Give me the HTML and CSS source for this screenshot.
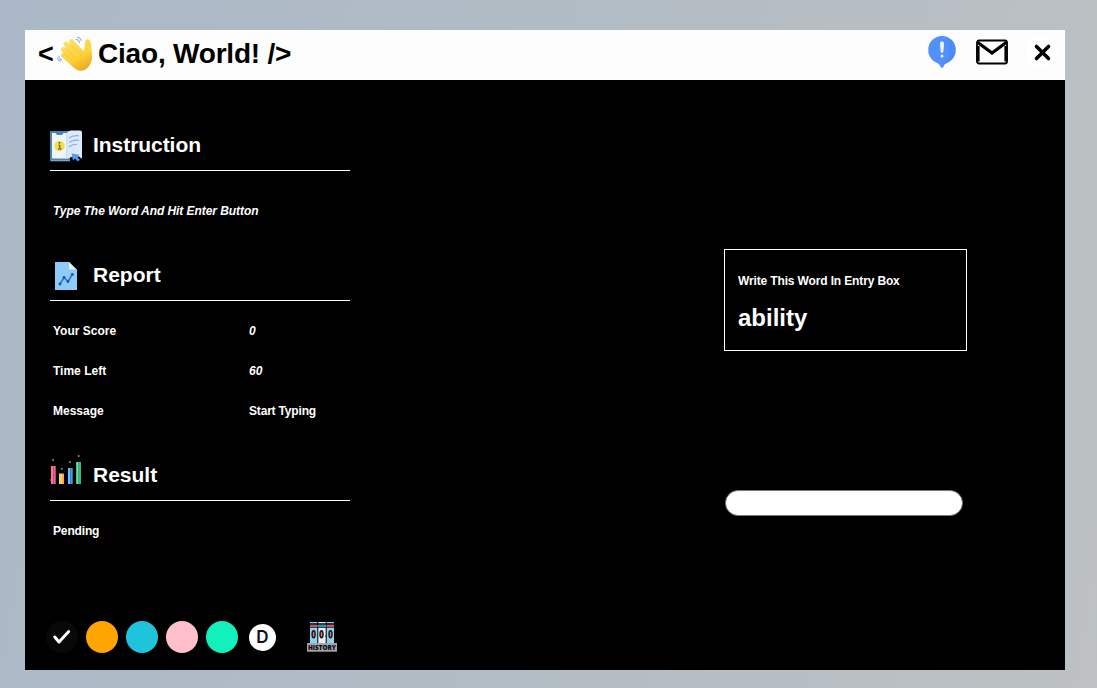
FILE: index.html
```html
<!DOCTYPE html>
<html lang="en">
<head>
<meta charset="utf-8">
<title>Ciao, World!</title>
<link rel="stylesheet" href="styles.css">
</head>
<body>
<div class="window">
  <header class="titlebar">
    <h1 class="title"><span class="bracket">&lt;</span>
      <svg class="wave" viewBox="0 0 42 42" width="42" height="42">
        <defs><linearGradient id="skin" gradientUnits="userSpaceOnUse" x1="14" y1="6" x2="30" y2="38"><stop offset="0" stop-color="#ffe164"/><stop offset=".6" stop-color="#fdd13a"/><stop offset="1" stop-color="#eba91f"/></linearGradient></defs>
        <g fill="none" stroke="url(#skin)" stroke-linecap="round" stroke-width="4.800">
          <path d="M17.500 9.500 29 22M12 12 25 26M9.500 17.500 22 30M9.500 23.500 22 34"/>
        </g>
        <path fill="url(#skin)" d="M19 11l10.500 8.500c1.200-2 1.300-5 1.300-8 .1-3 1-4.500 3-4.300 2.200.2 3 2 3.200 5 .3 5 1.200 9 .9 14-.4 6.500-5.400 12.500-11.200 12.500-3.200 0-5.700-2-8-4L9 24z"/>
        <g fill="none" stroke="#f3bc2c" stroke-width=".7"><path d="M15.500 11.500l9.500 10M11 15.500l10.500 10.500M9.500 21l9 8M29 20.500c-4 3-4 8 .5 10.500"/></g>
        <g fill="none" stroke="#7fb2f4" stroke-width="1.100" stroke-linecap="round" stroke-dasharray="2 1"><path d="M22 7.500c2 0 3 1 3.500 3M23.500 5.500c2.200.2 3.600 1.500 3.800 3.500M5 24c0 2 1 3.500 3 4M3.500 26c.4 1.800 1.500 2.700 3 3"/></g>
      </svg>
      <span class="name">Ciao, World! /&gt;</span></h1>
    <nav class="actions">
      <svg viewBox="0 0 32 34" width="32" height="34">
        <path fill="#5290fa" d="M16 1a14 14 0 0 1 4.500 27.200c-1.500.6-2.200 1.500-2.800 3-.8 2.200-2.600 2.200-3.400 0-.6-1.500-1.300-2.400-2.800-3A14 14 0 0 1 16 1z"/>
        <path fill="#4586f5" opacity=".5" d="M21 2.200A14 14 0 0 1 20.500 28.200l-4.500.5C23 24 26 11 21 2.200z"/>
        <path fill="#f0f4ff" d="M14 8.500c0-2.600 4-2.600 4 0l-.6 8c-.2 1.800-2.600 1.800-2.800 0z"/><circle cx="16" cy="21" r="1.500" fill="#e4ecff"/>
      </svg>
      <svg class="mail" viewBox="0 0 32 26" width="32" height="26">
        <rect x="1" y="1.500" width="30" height="23" rx="2" fill="#fff" stroke="#000" stroke-width="1.800"/>
        <path d="M2 7v15.500M30 7v15.500" stroke="#000" stroke-width="3.200"/>
        <path d="M1.500 3.200 16 14 30.500 3.200" fill="none" stroke="#000" stroke-width="3.200"/>
      </svg>
      <svg viewBox="0 0 32 32" width="32" height="32"><circle cx="16" cy="16" r="16" fill="#fff"/><path d="M10.500 10.500 22.500 22.500M22.500 10.500 10.500 22.500" stroke="#000" stroke-width="3.600" stroke-linecap="round"/></svg>
    </nav>
  </header>
  <main class="content">
    <div class="panel">
      <section class="section intro">
        <h2 class="heading">
          <svg viewBox="0 0 32 32" width="32" height="32">
            <path fill="#4e83ae" d="M0 1h20v30H0z"/><path fill="#75a8cc" d="M1 30h19v1.300H1z"/>
            <path fill="#eff5fd" d="M2 3h3.500l1.500 2h5l1.500-2h4v25.500H2z"/>
            <path fill="#dce9fb" d="M16.500 3C18.500 1 20 .5 23 .5h7c1.500 0 2 .7 2 2V29l-3-1.500c-4-1-8-.8-12.500 1.500z"/>
            <path d="M16.800 3v25.500" stroke="#b4cce9" stroke-width=".7"/>
            <circle cx="9.500" cy="16" r="5.200" fill="#f4dd48"/>
            <path d="M8.500 15.200h1.300v4M8 19h3.500" fill="none" stroke="#555342" stroke-width="1.100"/><circle cx="9.500" cy="12.800" r=".9" fill="#555342"/>
            <path d="M19 8c3-2.500 6-2.700 10-2.200M19 12.500c3-2.500 6-2.700 10-2.200M19 17c3-2.500 5-2.700 8-2.500" fill="none" stroke="#82afea" stroke-width="1.200"/>
            <path fill="#000" d="M20 27.500l9-1 3 2.500v3H20z"/>
            <path fill="#529bf4" d="M21.500 23.500l8 1.200-2.300 2 2.600 3-2 1.800-2.800-3-2 2.100z"/>
          </svg>Instruction</h2>
        <p class="row note">Type The Word And Hit Enter Button</p>
      </section>
      <section class="section">
        <h2 class="heading">
          <svg viewBox="0 0 32 32" width="32" height="32">
            <path fill="#90caf9" d="M5 2h14l8 7.500V30H5z"/><path fill="#e3f2fd" d="M19 2l7 7.500h-7z"/>
            <path d="M10 24 14 17.500 18 21.500 22.300 14.500" fill="none" stroke="#2879c8" stroke-width="1.500"/>
            <g fill="#1557a5"><circle cx="10" cy="24" r="1.400"/><circle cx="14" cy="17.500" r="1.400"/><circle cx="18" cy="21.500" r="1.400"/><circle cx="22.300" cy="14.500" r="1.400"/></g>
          </svg>Report</h2>
        <dl class="stats">
          <dt>Your Score</dt><dd class="value">0</dd>
          <dt>Time Left</dt><dd class="value">60</dd>
          <dt>Message</dt><dd class="message">Start Typing</dd>
        </dl>
      </section>
      <section class="section">
        <h2 class="heading">
          <svg class="chart" viewBox="0 0 32 32" width="32" height="32">
            <path fill="#ff748f" d="M1 11h2.500v18H1z"/><path fill="#f4629c" d="M3.500 11h2.200v18H3.500z"/>
            <path fill="#ffd05f" d="M9 18.500h3V29H9z"/><path fill="#f2b04e" d="M12 18.500h2V29h-2z"/>
            <path fill="#65bdf4" d="M18 13h2.500v16H18z"/><path fill="#4b98e8" d="M20.500 13h2.200v16h-2.200z"/>
            <path fill="#6fe0a0" d="M26.200 7h2.500v22h-2.500z"/><path fill="#30be86" d="M28.700 7H31v22h-2.300z"/>
            <g fill="#8288ab"><circle cx="3" cy="5" r="1"/><circle cx="11.800" cy="13.700" r="1"/><circle cx="20" cy="7" r="1"/><circle cx="28.700" cy="1" r="1"/></g><path fill="#9a4050" d="M0 24h1v2H0z"/>
          </svg>Result</h2>
        <p class="row status">Pending</p>
      </section>
      <footer class="themes">
        <span class="swatch black"><svg viewBox="0 0 32 32" width="32" height="32"><path d="M8.800 16 13 21 22.700 10.500" fill="none" stroke="#fff" stroke-width="3" stroke-linecap="round" stroke-linejoin="round"/></svg></span>
        <span class="swatch orange"></span><span class="swatch cyan"></span><span class="swatch pink"></span><span class="swatch green"></span>
        <span class="default">D</span>
        <svg class="history" viewBox="0 0 32 32" width="32" height="32">
          <path fill="#8bd3ea" d="M4 1h7.300v21H4zM20.700 1H28v21h-7.300z"/><path fill="#eeeef2" d="M12.300 1h7.400v21h-7.400z"/>
          <path fill="#000" d="M4 2.200h24v1.600H4zM4 6.200h24v.8H4z"/>
          <path fill="#ce5362" d="M4 4h7.300v2.200H4zM20.700 4H28v2.200h-7.300z"/><path fill="#1797b9" d="M12.300 4h7.400v2.200h-7.400z"/>
          <g fill="#f06e78" stroke="#171c22" stroke-width="1.500"><ellipse cx="7.600" cy="13.300" rx="1.500" ry="3.500"/><ellipse cx="15.500" cy="13.300" rx="1.500" ry="3.500"/><ellipse cx="24.500" cy="13.300" rx="1.500" ry="3.500"/></g>
          <path fill="#263b4b" d="M19.200 14.500H21V16h-1.800z"/>
          <path fill="#a6a4aa" d="M1 22h30v8.700H1z"/>
          <text class="history-label" x="16" y="28.600" text-anchor="middle" textLength="28" lengthAdjust="spacingAndGlyphs">HISTORY</text>
        </svg>
      </footer>
    </div>
    <div class="game">
      <div class="card"><p class="prompt">Write This Word In Entry Box</p><p class="word">ability</p></div>
      <input class="entry" type="text" aria-label="Entry box">
    </div>
  </main>
</div>
</body>
</html>
```
FILE: styles.css
```css
* { box-sizing: border-box; margin: 0; padding: 0; }
body {
  height: 688px;
  padding: 30px 32px 18px 25px;
  overflow: hidden;
  background: linear-gradient(100deg, #abb8c7 0%, #b2bcc4 50%, #bdc1c3 100%);
  font: bold 12px/40px "Liberation Sans", Arial, sans-serif;
  color: #fff;
}
svg { display: block; flex: none; overflow: visible; }
.window { height: 640px; background: #000; }
.titlebar {
  display: flex;
  justify-content: space-between;
  height: 50px;
  padding: 0 7px 0 10px;
  background: #fdfdfd;
  color: #000;
}
.title { display: flex; align-items: center; height: 48px; font-size: 28px; line-height: 48px; }
.bracket { width: 19px; padding-left: 3px; line-height: 48px; font-size: 27px; }
.wave { margin-top: -3px; }
.name { margin-left: 2px; letter-spacing: -0.2px; }
.actions { display: flex; gap: 18px; padding-top: 5px; }
.actions svg:last-child { margin-top: 1px; }
.mail { margin-top: 4px; }
.content { display: flex; justify-content: space-between; height: 590px; padding: 40px 98px 0 25px; }
.panel { width: 300px; }
.section { margin-bottom: 20px; }
.heading {
  display: flex;
  align-items: center;
  gap: 11px;
  height: 51px;
  margin-bottom: 9px;
  border-bottom: 1px solid #fff;
  font-size: 21px;
  line-height: 50px;
}
.heading svg { margin-top: 2px; }
.heading .chart { margin-top: -8px; }
.row { height: 40px; padding-left: 3px; line-height: 42px; }
.note { font-style: italic; letter-spacing: -0.06px; }
.status { letter-spacing: -0.15px; }
.message { letter-spacing: -0.18px; }
.intro .heading { margin-bottom: 19px; letter-spacing: -0.05px; }
.stats {
  display: grid;
  grid-template-columns: 196px 1fr;
  grid-auto-rows: 40px;
  padding-left: 3px;
  line-height: 42px;
}
.value { font-style: italic; }
.themes { display: flex; align-items: center; gap: 8px; height: 32px; margin: 71px 0 0 -4px; }
.swatch { width: 32px; height: 32px; border-radius: 50%; }
.black { background: #080808; }
.orange { background: #ffa500; }
.cyan { background: #1fc3dc; }
.pink { background: #ffbfcb; }
.green { background: #12f0bd; }
.default {
  width: 27px;
  height: 27px;
  margin: 0 -1px 0 3px;
  border-radius: 50%;
  background: #fff;
  color: #111;
  font: 600 17px/27px Inter, sans-serif;
  text-align: center;
}
.history { margin-left: 23px; }
.history-label { font: 800 7px "Open Sans", sans-serif; fill: #08080b; }
.game { width: 243px; padding-top: 129px; }
.card { height: 102px; padding: 12px 13px; border: 1px solid #fff; }
.prompt { line-height: 38px; letter-spacing: -0.14px; }
.word { font-size: 24px; line-height: 36px; }
.entry {
  display: block;
  width: 238px;
  height: 26px;
  margin: 139px 0 0 1px;
  padding: 0 12px;
  border: 1px solid #777;
  border-radius: 13px;
  background: #fff;
  outline: none;
}
```
